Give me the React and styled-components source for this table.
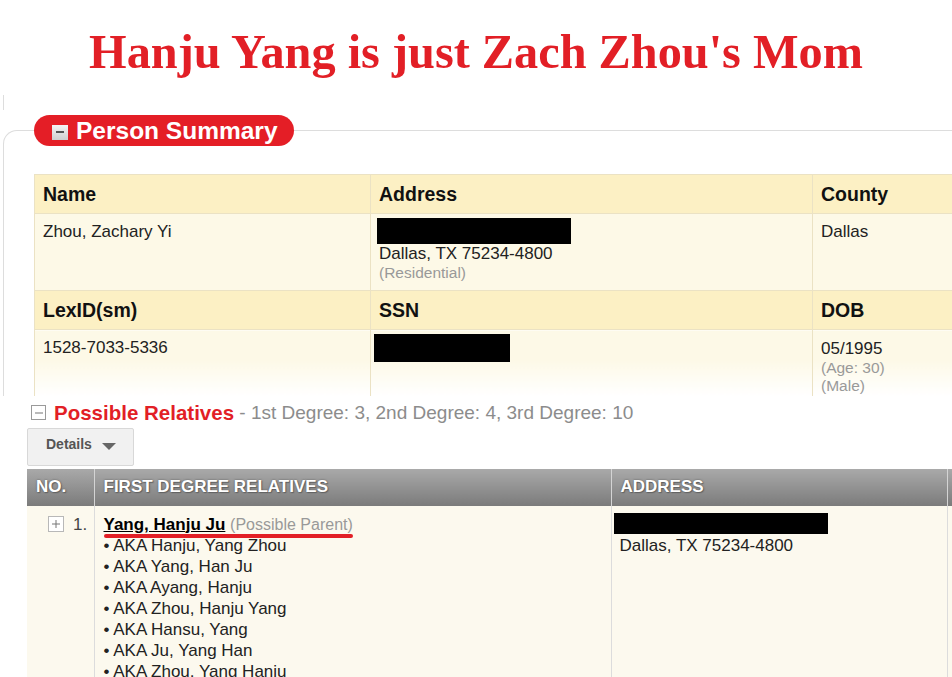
import React from "react";
import styled, { createGlobalStyle } from "styled-components";

const GlobalStyle = createGlobalStyle`
  body {
    margin: 0;
    background: #fff;
    font-family: "Liberation Sans", Arial, sans-serif;
  }
`;

const Page = styled.div`
  width: 952px;
  height: 677px;
  overflow: hidden;
  background: #fff;
`;

const Title = styled.h1`
  margin: 0;
  padding-top: 25px;
  line-height: 54px;
  text-align: center;
  font-family: "Liberation Serif", "Times New Roman", serif;
  font-size: 48.3px;
  font-weight: bold;
  color: #e21f26;
`;

const TopTick = styled.div`
  margin: 16px 0 0 3px;
  height: 15px;
  border-left: 1px solid #ddd;
`;

const Panel = styled.fieldset`
  margin: 5px 0 0 3px;
  padding: 28px 0 0 30px;
  min-width: 0;
  border: 1px solid #ddd;
  border-right: none;
  border-bottom: none;
  border-top-left-radius: 14px;
`;

const Pill = styled.legend`
  display: flex;
  align-items: center;
  gap: 8px;
  height: 31px;
  padding: 0 16px 0 18px;
  border-radius: 16px;
  background: #e41e26;
  color: #fff;
  font-size: 24.5px;
  font-weight: bold;
`;

const PillIcon = styled.span`
  display: flex;
  align-items: center;
  justify-content: center;
  width: 16px;
  height: 15px;
  margin-top: 3px;
  background: linear-gradient(#f4f4f4, #cfcfcf);
  &::before {
    content: "";
    width: 8px;
    height: 2px;
    background: #555;
  }
`;

const SummaryTable = styled.table`
  width: 1000px;
  table-layout: fixed;
  border-collapse: collapse;
  color: #222;
`;

const Row = styled.tr`
  height: ${(p) => p.$h}px;
`;

const HeadCell = styled.th`
  padding: 0 8px;
  text-align: left;
  font-size: 19.5px;
  font-weight: bold;
  color: #111;
  background: #fcf0c4;
  border: 1px solid #ebe2c4;
`;

const DataCell = styled.td`
  padding: ${(p) => (p.$pt ? p.$pt : 8)}px 8px 0;
  vertical-align: top;
  font-size: 17px;
  line-height: 20px;
  background: ${(p) =>
    p.$fade ? "linear-gradient(#fdf9e7 45%, #fff)" : "#fdf9e7"};
  border: 1px solid #ebe2c4;
  border-bottom: ${(p) => (p.$fade ? "none" : "1px solid #ebe2c4")};
`;

const Redact = styled.div`
  width: ${(p) => p.$w}px;
  height: ${(p) => p.$h}px;
  margin: ${(p) => p.$m};
  background: #000;
`;

const Muted = styled.div`
  font-size: 15.5px;
  line-height: 18px;
  color: #999;
`;

const Relatives = styled.section`
  margin-left: 27px;
`;

const RelHeader = styled.div`
  display: flex;
  align-items: center;
  height: 22px;
  margin-top: 6px;
  padding-left: 4px;
  white-space: nowrap;
`;

const BoxIcon = styled.span`
  position: relative;
  display: inline-block;
  flex: none;
  width: ${(p) => p.$size}px;
  height: ${(p) => p.$size}px;
  box-sizing: border-box;
  border: 1px solid ${(p) => p.$border};
  background: #fff;
  &::before,
  &::after {
    content: "";
    position: absolute;
    left: 50%;
    top: 50%;
    background: #777;
  }
  &::before {
    width: 8px;
    height: 1px;
    transform: translate(-50%, -50%);
  }
  &::after {
    display: ${(p) => (p.$plus ? "block" : "none")};
    width: 1px;
    height: 8px;
    transform: translate(-50%, -50%);
  }
`;

const RelTitle = styled.span`
  margin-left: 8px;
  font-size: 20.5px;
  font-weight: bold;
  color: #e21f26;
`;

const RelCounts = styled.span`
  font-size: 19px;
  color: #8c8c8c;
`;

const DetailsButton = styled.button`
  display: flex;
  align-items: center;
  gap: 10px;
  width: 107px;
  height: 38px;
  margin-top: 4px;
  padding: 0 0 6px 18px;
  box-sizing: border-box;
  border: 1px solid #d8d8d8;
  border-radius: 2px;
  background: #f1f1f1;
  font-family: "Liberation Sans", Arial, sans-serif;
  font-size: 14px;
  font-weight: bold;
  color: #555;
  &::after {
    content: "";
    margin-top: 5px;
    border-left: 7px solid transparent;
    border-right: 7px solid transparent;
    border-top: 7px solid #666;
  }
`;

const RelTable = styled.table`
  width: 1000px;
  margin-top: 3px;
  table-layout: fixed;
  border-collapse: collapse;
`;

const GreyHead = styled.th`
  height: 37px;
  padding: 0 9px;
  text-align: left;
  font-size: 17px;
  font-weight: bold;
  color: #fff;
  text-shadow: 0 0 2px #555, 1px 1px 1px #666;
  background: linear-gradient(#a9a9a9, #7b7b7b);
  border-left: 1px solid #d4d4d4;
  &:first-child {
    border-left: none;
  }
`;

const RelCell = styled.td`
  height: 180px;
  padding: 8px ${(p) => p.$px}px 0;
  vertical-align: top;
  background: #fcf9ee;
  font-size: 17px;
  line-height: 21px;
  color: #222;
  border-left: 1px solid #dcdcdc;
  &:first-child {
    border-left: none;
  }
`;

const NumWrap = styled.div`
  display: flex;
  align-items: center;
  gap: 9px;
  padding-left: 12px;
  color: #444;
`;

const NameLine = styled.span`
  position: relative;
  &::after {
    content: "";
    position: absolute;
    left: 0;
    right: 0;
    bottom: -4px;
    height: 4px;
    border-radius: 3px;
    background: #e21f26;
  }
`;

const RelName = styled.span`
  font-weight: bold;
  color: #000;
  text-decoration: underline;
`;

const Relation = styled.span`
  font-size: 16px;
  color: #999;
`;

const akas = [
  "Hanju, Yang Zhou",
  "Yang, Han Ju",
  "Ayang, Hanju",
  "Zhou, Hanju Yang",
  "Hansu, Yang",
  "Ju, Yang Han",
  "Zhou, Yang Hanju",
];

export default function App() {
  return (
    <Page>
      <GlobalStyle />
      <Title>Hanju Yang is just Zach Zhou's Mom</Title>
      <TopTick />
      <Panel>
        <Pill>
          <PillIcon />
          Person Summary
        </Pill>
        <SummaryTable>
          <colgroup>
            <col style={{ width: 336 }} />
            <col style={{ width: 442 }} />
            <col />
          </colgroup>
          <tbody>
            <Row $h={39}>
              <HeadCell>Name</HeadCell>
              <HeadCell>Address</HeadCell>
              <HeadCell>County</HeadCell>
            </Row>
            <Row $h={77}>
              <DataCell>Zhou, Zachary Yi</DataCell>
              <DataCell $pt={4}>
                <Redact $w={194} $h={26} $m="0 0 0 -2px" />
                <div>Dallas, TX 75234-4800</div>
                <Muted>(Residential)</Muted>
              </DataCell>
              <DataCell>Dallas</DataCell>
            </Row>
            <Row $h={39}>
              <HeadCell>LexID(sm)</HeadCell>
              <HeadCell>SSN</HeadCell>
              <HeadCell>DOB</HeadCell>
            </Row>
            <Row $h={66}>
              <DataCell $pt={8} $fade>
                1528-7033-5336
              </DataCell>
              <DataCell $pt={4} $fade>
                <Redact $w={136} $h={28} $m="0 0 0 -5px" />
              </DataCell>
              <DataCell $pt={9} $fade>
                <div>05/1995</div>
                <Muted>(Age: 30)</Muted>
                <Muted>(Male)</Muted>
              </DataCell>
            </Row>
          </tbody>
        </SummaryTable>
      </Panel>

      <Relatives>
        <RelHeader>
          <BoxIcon $size={15} $border="#9a9a9a" />
          <RelTitle>Possible Relatives</RelTitle>
          <RelCounts>
            &nbsp;- 1st Degree: 3, 2nd Degree: 4, 3rd Degree: 10
          </RelCounts>
        </RelHeader>
        <DetailsButton>Details</DetailsButton>
        <RelTable>
          <colgroup>
            <col style={{ width: 67 }} />
            <col style={{ width: 517 }} />
            <col style={{ width: 336 }} />
            <col />
          </colgroup>
          <thead>
            <tr>
              <GreyHead>NO.</GreyHead>
              <GreyHead>FIRST DEGREE RELATIVES</GreyHead>
              <GreyHead>ADDRESS</GreyHead>
              <GreyHead />
            </tr>
          </thead>
          <tbody>
            <tr>
              <RelCell $px={9}>
                <NumWrap>
                  <BoxIcon $size={16} $border="#b8b8b8" $plus />
                  1.
                </NumWrap>
              </RelCell>
              <RelCell $px={9}>
                <NameLine>
                  <RelName>Yang, Hanju Ju</RelName>{" "}
                  <Relation>(Possible Parent)</Relation>
                </NameLine>
                {akas.map((a) => (
                  <div key={a}>• AKA {a}</div>
                ))}
              </RelCell>
              <RelCell $px={8}>
                <Redact $w={214} $h={21} $m="-1px 0 1px -6px" />
                <div>Dallas, TX 75234-4800</div>
              </RelCell>
              <RelCell $px={8} />
            </tr>
          </tbody>
        </RelTable>
      </Relatives>
    </Page>
  );
}
